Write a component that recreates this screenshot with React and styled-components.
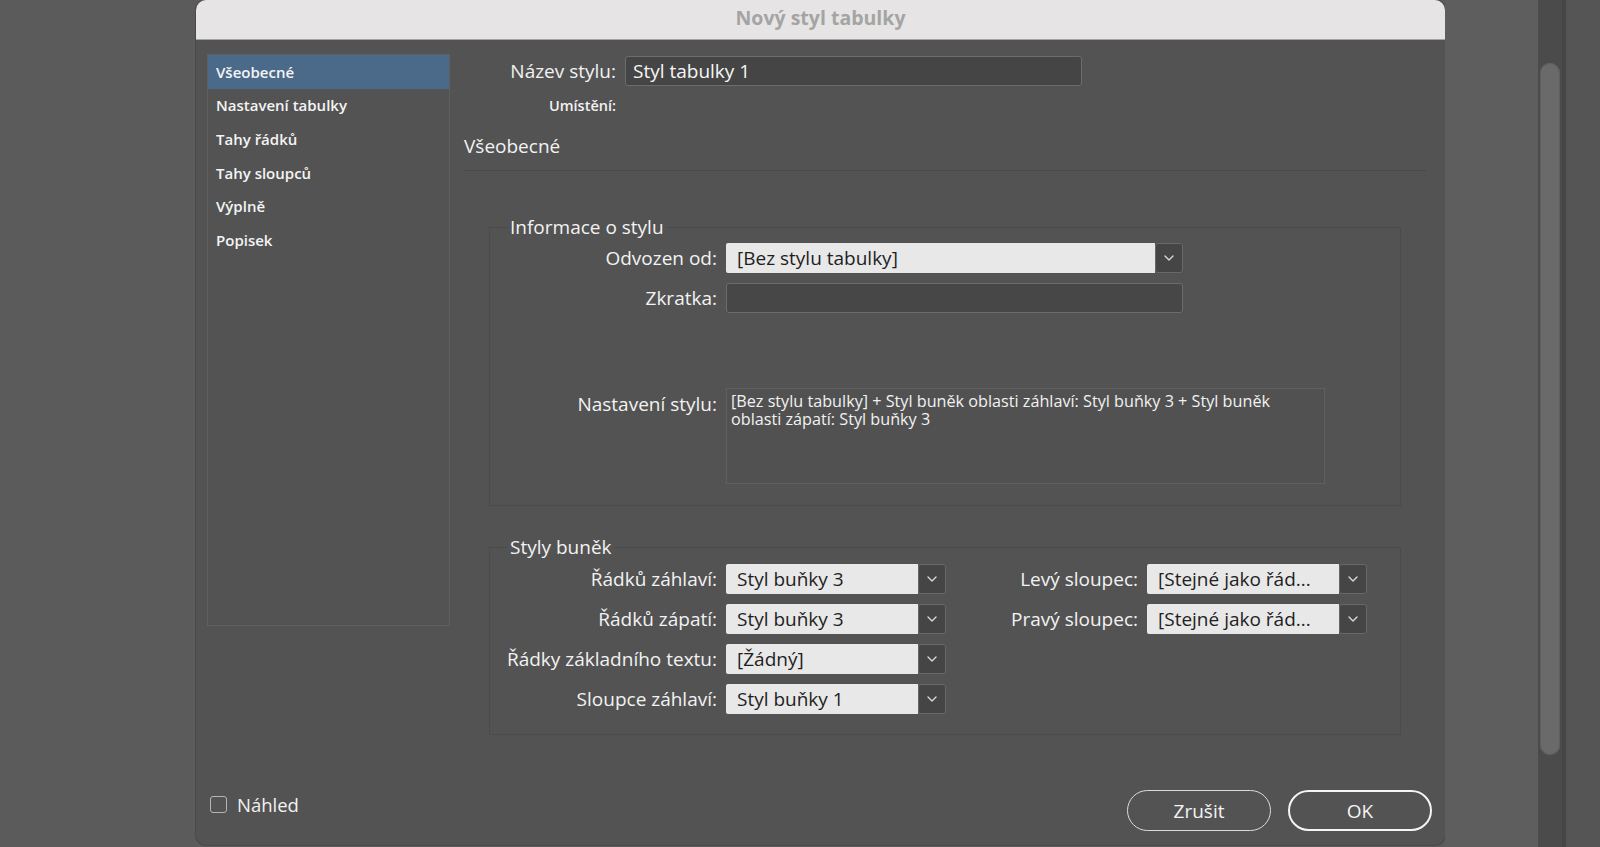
import styled, { createGlobalStyle } from 'styled-components';

const GlobalStyle = createGlobalStyle`
  html, body {
    margin: 0;
    padding: 0;
    overflow: hidden;
  }
  body {
    background: #5c5c5c;
    font-family: "Open Sans", "Noto Sans", sans-serif;
    color: #f2f2f2;
  }
`;

const sideItems = ['Všeobecné', 'Nastavení tabulky', 'Tahy řádků', 'Tahy sloupců', 'Výplně', 'Popisek'];

const Chevron = () => (
  <svg width="10" height="6" viewBox="0 0 10 6">
    <path d="M1 1l4 4 4-4" fill="none" stroke="#d8d8d8" strokeWidth="1.4" strokeLinecap="round" strokeLinejoin="round" />
  </svg>
);

const Dropdown = ({ value, width }) => (
  <Select width={width}>
    <SelectValue>{value}</SelectValue>
    <SelectArrow>
      <Chevron />
    </SelectArrow>
  </Select>
);

const App = () => {
  return (
    <>
      <GlobalStyle />
      <Page>
        <LeftGutter />
        <Dialog>
          <TitleBar>Nový styl tabulky</TitleBar>
          <Content>
            <Sidebar>
              {sideItems.map((item, i) => (
                <SideItem key={item} selected={i === 0}>
                  {item}
                </SideItem>
              ))}
            </Sidebar>
            <Main>
              <NameRow>
                <Label>Název stylu:</Label>
                <TextField>Styl tabulky 1</TextField>
              </NameRow>
              <NameRow>
                <SmallLabel>Umístění:</SmallLabel>
                <span />
              </NameRow>
              <Heading>Všeobecné</Heading>

              <Group>
                <Legend>Informace o stylu</Legend>
                <InfoGrid>
                  <Label>Odvozen od:</Label>
                  <Dropdown value="[Bez stylu tabulky]" width={457} />
                  <Label>Zkratka:</Label>
                  <EmptyField />
                  <TopLabel>Nastavení stylu:</TopLabel>
                  <SummaryBox>
                    [Bez stylu tabulky] + Styl buněk oblasti záhlaví: Styl buňky 3 + Styl buněk oblasti zápatí: Styl buňky 3
                  </SummaryBox>
                </InfoGrid>
              </Group>

              <Group second>
                <Legend>Styly buněk</Legend>
                <CellGrid>
                  <Label>Řádků záhlaví:</Label>
                  <Dropdown value="Styl buňky 3" width={220} />
                  <Label>Levý sloupec:</Label>
                  <Dropdown value="[Stejné jako řád..." width={220} />

                  <Label>Řádků zápatí:</Label>
                  <Dropdown value="Styl buňky 3" width={220} />
                  <Label>Pravý sloupec:</Label>
                  <Dropdown value="[Stejné jako řád..." width={220} />

                  <Label>Řádky základního textu:</Label>
                  <Dropdown value="[Žádný]" width={220} />
                  <span />
                  <span />

                  <Label>Sloupce záhlaví:</Label>
                  <Dropdown value="Styl buňky 1" width={220} />
                </CellGrid>
              </Group>
            </Main>
          </Content>
          <Footer>
            <Preview>
              <CheckBox />
              Náhled
            </Preview>
            <Buttons>
              <Button>Zrušit</Button>
              <Button primary>OK</Button>
            </Buttons>
          </Footer>
        </Dialog>
        <RightGutter />
        <ScrollTrack>
          <Thumb />
        </ScrollTrack>
        <Edge />
        <Rest />
      </Page>
    </>
  );
};

const Page = styled.div`
  display: flex;
  width: 1600px;
  height: 847px;
`;
const LeftGutter = styled.div`
  width: 196px;
  flex-shrink: 0;
  background: #5b5b5b;
`;
const Dialog = styled.div`
  width: 1249px;
  height: 845px;
  flex-shrink: 0;
  display: flex;
  flex-direction: column;
  background: #535353;
  border-radius: 10px;
  overflow: hidden;
  box-shadow: 0 0 0 1px #4a4a4a;
`;
const TitleBar = styled.div`
  height: 40px;
  box-sizing: border-box;
  flex-shrink: 0;
  display: flex;
  align-items: center;
  justify-content: center;
  padding-bottom: 4px;
  background: #e6e4e4;
  border-bottom: 1px solid #a3a3a3;
  color: #a4a4a4;
  font-size: 19.5px;
  font-weight: 700;
`;
const Content = styled.div`
  display: flex;
  padding: 14px 0 0 11px;
`;
const Sidebar = styled.div`
  width: 243px;
  height: 572px;
  box-sizing: border-box;
  flex-shrink: 0;
  border: 1px solid #5f5f5f;
`;
const SideItem = styled.div`
  height: 33.6px;
  display: flex;
  align-items: center;
  padding-left: 8px;
  font-size: 15px;
  font-weight: 600;
  color: #f4f4f4;
  background: ${(props) => (props.selected ? '#4b6a89' : 'transparent')};
`;
const Main = styled.div`
  width: 962px;
  margin-left: 14px;
  padding-top: 2px;
`;
const NameRow = styled.div`
  display: grid;
  grid-template-columns: 152px 457px;
  column-gap: 9px;
  align-items: center;
  min-height: 30px;
  & + & {
    margin-top: 5px;
  }
`;
const Label = styled.div`
  text-align: right;
  font-size: 19px;
  line-height: 24px;
  font-weight: 500;
  white-space: nowrap;
  color: #f2f2f2;
`;
const SmallLabel = styled(Label)`
  font-size: 14.5px;
  font-weight: 600;
`;
const TopLabel = styled(Label)`
  align-self: start;
  margin-top: 69px;
`;
const TextField = styled.div`
  height: 30px;
  box-sizing: border-box;
  display: flex;
  align-items: center;
  padding: 0 7px;
  background: #454545;
  border: 1px solid #6c6c6c;
  border-radius: 3px;
  font-size: 19px;
  color: #f6f6f6;
`;
const EmptyField = styled(TextField)`
  width: 457px;
  background: #474747;
`;
const Heading = styled.div`
  margin-top: 13px;
  padding-bottom: 12px;
  border-bottom: 1px solid #4a4a4a;
  font-size: 19px;
  line-height: 24px;
  font-weight: 500;
`;
const Group = styled.fieldset`
  margin: ${(props) => (props.second ? '29px' : '44px')} 25px 0 25px;
  padding: ${(props) => (props.second ? '5px 0 20px 0' : '4px 0 21px 0')};
  border: 1px solid #4b4b4b;
  min-width: 0;
`;
const Legend = styled.legend`
  margin-left: 18px;
  padding: 0 2px;
  font-size: 19px;
  line-height: 24px;
  font-weight: 500;
  color: #f2f2f2;
`;
const InfoGrid = styled.div`
  display: grid;
  grid-template-columns: 227px auto;
  column-gap: 9px;
  row-gap: 10px;
  align-items: center;
  justify-items: start;
  & > ${Label} {
    justify-self: stretch;
  }
`;
const SummaryBox = styled.div`
  margin-top: 65px;
  width: 599px;
  height: 96px;
  box-sizing: border-box;
  padding: 3px 24px 3px 4px;
  border: 1px solid #606060;
  background: #515151;
  font-size: 16.2px;
  line-height: 18px;
  font-weight: 500;
  color: #f2f2f2;
`;
const CellGrid = styled.div`
  display: grid;
  grid-template-columns: 227px 220px 183px 220px;
  column-gap: 9px;
  row-gap: 10px;
  align-items: center;
`;
const Select = styled.div`
  width: ${(props) => props.width}px;
  height: 30px;
  display: flex;
`;
const SelectValue = styled.div`
  flex: 1;
  display: flex;
  align-items: center;
  padding-left: 11px;
  background: #e8e8e8;
  border-radius: 2px 0 0 2px;
  color: #1e1e1e;
  font-size: 19px;
  white-space: nowrap;
  overflow: hidden;
`;
const SelectArrow = styled.div`
  width: 28px;
  box-sizing: border-box;
  display: flex;
  align-items: center;
  justify-content: center;
  background: #454545;
  border: 1px solid #686868;
  border-radius: 3px;
`;
const Footer = styled.div`
  margin-top: auto;
  display: flex;
  align-items: center;
  justify-content: space-between;
  padding: 0 13px 14px 14px;
`;
const Preview = styled.div`
  display: flex;
  align-items: center;
  gap: 10px;
  font-size: 18.5px;
  font-weight: 500;
  margin-bottom: 12px;
`;
const CheckBox = styled.div`
  width: 17px;
  height: 17px;
  box-sizing: border-box;
  border: 1.5px solid #b5b5b5;
  border-radius: 3px;
`;
const Buttons = styled.div`
  display: flex;
  gap: 17px;
`;
const Button = styled.button`
  width: 144px;
  height: 41px;
  box-sizing: border-box;
  border-radius: 21px;
  background: transparent;
  border: ${(props) => (props.primary ? '2.5px solid #f5f5f5' : '1.5px solid #dcdcdc')};
  color: #f4f4f4;
  font-family: inherit;
  font-size: 19px;
  font-weight: 500;
`;
const RightGutter = styled.div`
  width: 93px;
  flex-shrink: 0;
  background: #5e5e5e;
`;
const ScrollTrack = styled.div`
  width: 24px;
  flex-shrink: 0;
  box-sizing: border-box;
  padding: 63px 2px 0;
  background: #4b4b4b;
`;
const Thumb = styled.div`
  height: 692px;
  border-radius: 10px;
  background: #6a6a6a;
  box-shadow: inset 0 0 0 1px #5f5f5f;
`;
const Edge = styled.div`
  width: 4px;
  flex-shrink: 0;
  background: #464646;
`;
const Rest = styled.div`
  flex: 1;
  background: #555555;
`;

export default App;
